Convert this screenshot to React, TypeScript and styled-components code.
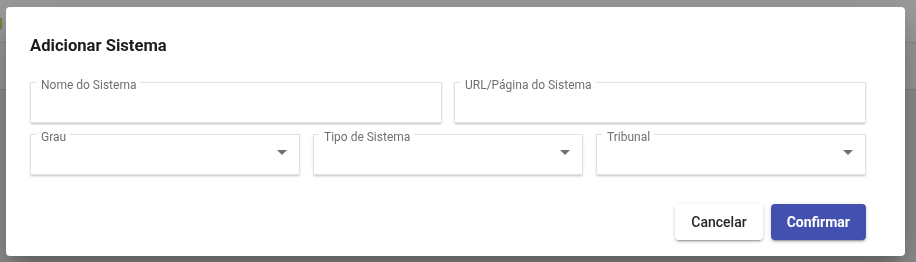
import React from "react";
import styled, { createGlobalStyle } from "styled-components";

const GlobalStyle = createGlobalStyle`
  html, body { margin: 0; padding: 0; }
  body {
    width: 916px;
    height: 262px;
    overflow: hidden;
    font-family: Roboto, "Liberation Sans", Arial, sans-serif;
    background: #eaeaea;
  }
  * { box-sizing: border-box; }
`;

const Page = styled.div`
  width: 916px;
  height: 262px;
  display: flex;
  flex-direction: column;
`;

const AppBar = styled.header`
  height: 43px;
  background: #fbfbfb;
  border-bottom: 1px solid #dcdcdc;
  display: flex;
  align-items: flex-start;
  padding-top: 12px;
  overflow: hidden;
`;

const Brand = styled.span`
  font-size: 16px;
  color: #c8c42a;
  margin-left: -6px;
  font-family: Roboto, sans-serif;
`;

const SubBar = styled.div`
  height: 47px;
  background: #f6f6f6;
  border-bottom: 1px solid #d6d6d6;
`;

const Content = styled.main`
  flex: 1;
  background: #e6e6e6;
`;

const Backdrop = styled.div`
  position: fixed;
  inset: 0;
  background: rgba(0, 0, 0, 0.38);
`;

const DialogLayer = styled.div`
  position: fixed;
  left: 6px;
  top: 7px;
`;

const Dialog = styled.section`
  width: 899px;
  height: 249px;
  background: #ffffff;
  border-radius: 4px;
  box-shadow: 0 11px 15px -7px rgba(0, 0, 0, 0.2),
    0 24px 38px 3px rgba(0, 0, 0, 0.14), 0 9px 46px 8px rgba(0, 0, 0, 0.12);
  padding: 29px 39px 16px 24px;
  display: flex;
  flex-direction: column;
`;

const Title = styled.h2`
  margin: 0;
  font-size: 16.6px;
  line-height: 20px;
  font-weight: 700;
  color: #1c1c1c;
  letter-spacing: 0;
`;

const Form = styled.div`
  margin-top: 17px;
  display: flex;
  flex-direction: column;
  gap: 2px;
`;

const Row = styled.div<{ $cols: number }>`
  display: grid;
  grid-template-columns: repeat(${(p) => p.$cols}, 1fr);
  column-gap: ${(p) => (p.$cols === 3 ? 13 : 12)}px;
`;

const Field = styled.fieldset`
  margin: 0;
  min-width: 0;
  padding: 0 12px;
  border: 1px solid #e2e2e2;
  border-radius: 0;
  box-shadow: 0 2px 2px -1px rgba(0, 0, 0, 0.18), 0 1px 3px rgba(0, 0, 0, 0.08);
  background: #fff;
`;

const Legend = styled.legend`
  margin-left: -7px;
  padding: 6px 4px 0 5px;
  font-size: 12px;
  line-height: 12px;
  color: #707070;
  font-weight: 400;
`;

const InputBody = styled.div`
  height: 31px;
`;

const SelectBody = styled.div`
  height: 31px;
  display: flex;
  justify-content: flex-end;
  align-items: flex-start;
  padding-top: 7px;
`;

const Arrow = styled.span`
  width: 0;
  height: 0;
  border-left: 5px solid transparent;
  border-right: 5px solid transparent;
  border-top: 5px solid #707070;
`;

const Actions = styled.div`
  margin-top: 29px;
  display: flex;
  justify-content: flex-end;
  gap: 8px;
`;

const Button = styled.button<{ $primary?: boolean }>`
  height: 36px;
  padding: 0 16px;
  border: none;
  border-radius: 4px;
  font-family: Roboto, "Liberation Sans", Arial, sans-serif;
  font-size: 14px;
  font-weight: ${(p) => (p.$primary ? 700 : 500)};
  color: ${(p) => (p.$primary ? "#ffffff" : "#262626")};
  background: ${(p) => (p.$primary ? "#4350b0" : "#ffffff")};
  box-shadow: 0 3px 1px -2px rgba(0, 0, 0, 0.2), 0 2px 2px 0 rgba(0, 0, 0, 0.14),
    0 1px 5px 0 rgba(0, 0, 0, 0.12);
  cursor: pointer;
`;

const TextField = ({ label }: { label: string }) => (
  <Field>
    <Legend>{label}</Legend>
    <InputBody />
  </Field>
);

const SelectField = ({ label }: { label: string }) => (
  <Field>
    <Legend>{label}</Legend>
    <SelectBody>
      <Arrow />
    </SelectBody>
  </Field>
);

export default function App() {
  return (
    <>
      <GlobalStyle />
      <Page>
        <AppBar>
          <Brand>g</Brand>
        </AppBar>
        <SubBar />
        <Content />
      </Page>
      <Backdrop />
      <DialogLayer>
        <Dialog>
          <Title>Adicionar Sistema</Title>
          <Form>
            <Row $cols={2}>
              <TextField label="Nome do Sistema" />
              <TextField label="URL/Página do Sistema" />
            </Row>
            <Row $cols={3}>
              <SelectField label="Grau" />
              <SelectField label="Tipo de Sistema" />
              <SelectField label="Tribunal" />
            </Row>
          </Form>
          <Actions>
            <Button>Cancelar</Button>
            <Button $primary>Confirmar</Button>
          </Actions>
        </Dialog>
      </DialogLayer>
    </>
  );
}
